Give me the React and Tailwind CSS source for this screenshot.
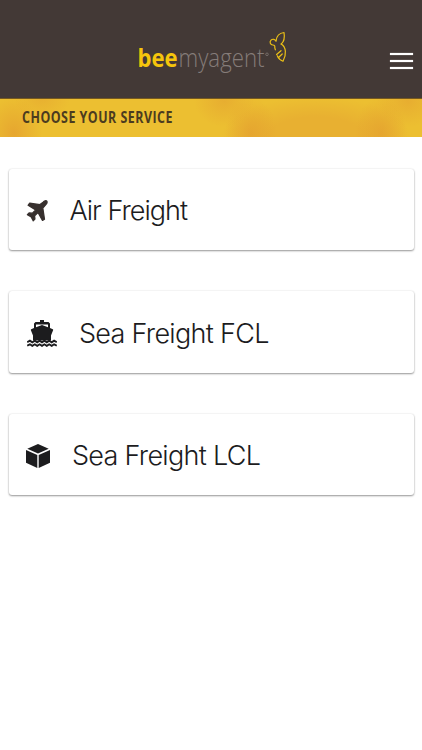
const PlaneIcon = () => (
  <svg viewBox="0 0 22 22" className="-ml-px h-[22px] w-[22px] text-[#37302e]" fill="currentColor">
    <path d="M20.800 1.200c.5.800.1 2.400-1.200 3.700L16.800 8l1.700 11.300-2 1.100-4.500-7.900-3.400 3.300.3 3.300-1.700 1.600-2-3.800-3.800-2.100 1.700-1.800 3.300.200 3.300-3.300L2.100 5.300l1.600-2.100L14 4.600l3.100-2.400c1.300-1.300 2.900-1.900 3.700-1z" stroke="currentColor" strokeWidth="1.300" strokeLinejoin="round" />
  </svg>
);

const ShipIcon = () => (
  <svg viewBox="0 0 30 27" className="h-[27px] w-[30px] text-[#1c1c1e]" fill="currentColor">
    <path d="M13 0h4v2h4.500l1.500 1.500V8l2.800 1.300c.5.200.5.600.300 1L24 15.500V20.500H6v-5l-2.100-5.200c-.2-.4-.2-.8.300-1L7 8V3.500L8.500 2H13zM9 4.500v2.700l6-2.300 6 2.300V4.500z" fillRule="evenodd" />
    <path d="M.2 22.100l2.700-1.400 2.400 1.600 2.500-1.600 2.400 1.600 2.400-1.600 2.400 1.600 2.400-1.600 2.400 1.600 2.400-1.600 2.500 1.600 2.400-1.600 2.700 1.400M.2 25.700l2.700-1.400 2.400 1.600 2.500-1.600 2.400 1.600 2.400-1.600 2.400 1.600 2.400-1.600 2.400 1.600 2.400-1.600 2.500 1.600 2.400-1.600 2.700 1.400" fill="none" stroke="currentColor" strokeWidth="1.900" />
  </svg>
);

const CubeIcon = () => (
  <svg viewBox="0 0 24 24" className="-ml-[0.500px] h-[24px] w-[24px] text-[#1c1c1e]" fill="currentColor">
    <path d="M12 0l10.700 4.700L12 9.400 1.300 4.700zM0 6l11.300 5v13L0 18.800zM24 6l-11.300 5v13L24 18.800z" />
  </svg>
);

const services = [
  { name: "Air Freight", icon: <PlaneIcon />, gap: "gap-[22px]", text: "tracking-[-0.980px]" },
  { name: "Sea Freight FCL", icon: <ShipIcon />, gap: "gap-[22.500px]", text: "tracking-[-0.700px]" },
  { name: "Sea Freight LCL", icon: <CubeIcon />, gap: "gap-[22px]", text: "tracking-[-0.700px]" },
];

function Logo() {
  return (
    <svg viewBox="0 0 160 50" className="h-[50px] w-[160px]" role="img" aria-label="beemyagent">
      <text x="3.500" y="39.300" fontSize="25" fontWeight="700" fill="#f5c50c" textLength="40" lengthAdjust="spacingAndGlyphs">
        bee
      </text>
      <text x="44.500" y="39.300" fontSize="26" fontWeight="300" fill="#857c79" textLength="86" lengthAdjust="spacingAndGlyphs">
        myagent
      </text>
      <circle cx="133" cy="26.300" r="1.300" fill="none" stroke="#857c79" strokeWidth="0.700" />
      {/* Bee */}
      <g fill="none" stroke="#ecc016" strokeWidth="1.200" strokeLinecap="round" strokeLinejoin="round">
        <path d="M142 13C142.500 8.500 145.500 5 150 4.500c.6 3.500.8 8.500-2.800 11.500" />
        <path d="M142 13c-.9-2-3.500-2.300-5-.8-1.800 1.800-.6 4.800 1.800 4.800M138.800 17c1.900 0 2.200 1.200 2 2.800l.6 2" />
        <path d="M147.200 16c5 3 5.500 10.500 1.800 17.300-2.500-1-4.700-3-5.700-5.500" />
        <path d="M142.600 26.500l4.400-3.800M144.800 29.300l3.400-3.300" />
      </g>
    </svg>
  );
}

export default function App() {
  return (
    <div className="min-h-screen bg-white font-['Open_Sans',sans-serif]">
      {/* Header */}
      <header className="flex h-[98px] items-end justify-between bg-[#433936] pr-[9.500px] pb-[20px] pl-[134px]">
        <Logo />
        <button aria-label="Menu" className="mb-[9px] flex w-[23px] flex-col gap-[5px]">
          <span className="h-[2px] w-full bg-white shadow-[0_0_1px_#fff]" />
          <span className="h-[2px] w-full bg-white shadow-[0_0_1px_#fff]" />
          <span className="h-[2px] w-full bg-white shadow-[0_0_1px_#fff]" />
        </button>
      </header>

      {/* Title bar */}
      <div className="flex h-[39px] items-center border-t border-[#76591f] bg-[#ecbf31] bg-[radial-gradient(ellipse_28px_36px_at_14px_34px,#e5a02fcc,#e5a02f00),radial-gradient(ellipse_28px_20px_at_42px_0px,#e6aa30aa,#e6aa3000),radial-gradient(ellipse_30px_26px_at_224px_2px,#e5a530aa,#e5a53000),radial-gradient(ellipse_26px_36px_at_251px_34px,#e4a02fbb,#e4a02f00),radial-gradient(ellipse_26px_36px_at_381px_34px,#e4a02fbb,#e4a02f00),radial-gradient(ellipse_30px_26px_at_408px_2px,#e5a530aa,#e5a53000),radial-gradient(ellipse_95px_40px_at_316px_38px,#e8b031_50%,#e8b03100)] bg-no-repeat pb-[3px] pl-[22px]">
        <h1 className="origin-left scale-x-[0.800] text-[15.500px] leading-5 font-bold tracking-[0.620px] whitespace-nowrap text-[#4b3b1f]">
          CHOOSE YOUR SERVICE
        </h1>
      </div>

      {/* Services */}
      <main className="flex flex-col gap-[41px] px-[8.500px] pt-[32px]">
        {services.map((s) => (
          <div
            key={s.name}
            className={`flex h-[81.300px] items-center rounded-[3px] bg-white pt-[3px] pl-[18px] shadow-[0_1px_2px_rgba(0,0,0,0.400),0_0_2px_rgba(0,0,0,0.100)] ${s.gap}`}
          >
            {s.icon}
            <span className={`pt-px font-['Inter',sans-serif] text-[27px] font-light whitespace-nowrap text-[#1c1c1e] ${s.text}`}>
              {s.name}
            </span>
          </div>
        ))}
      </main>
    </div>
  );
}
